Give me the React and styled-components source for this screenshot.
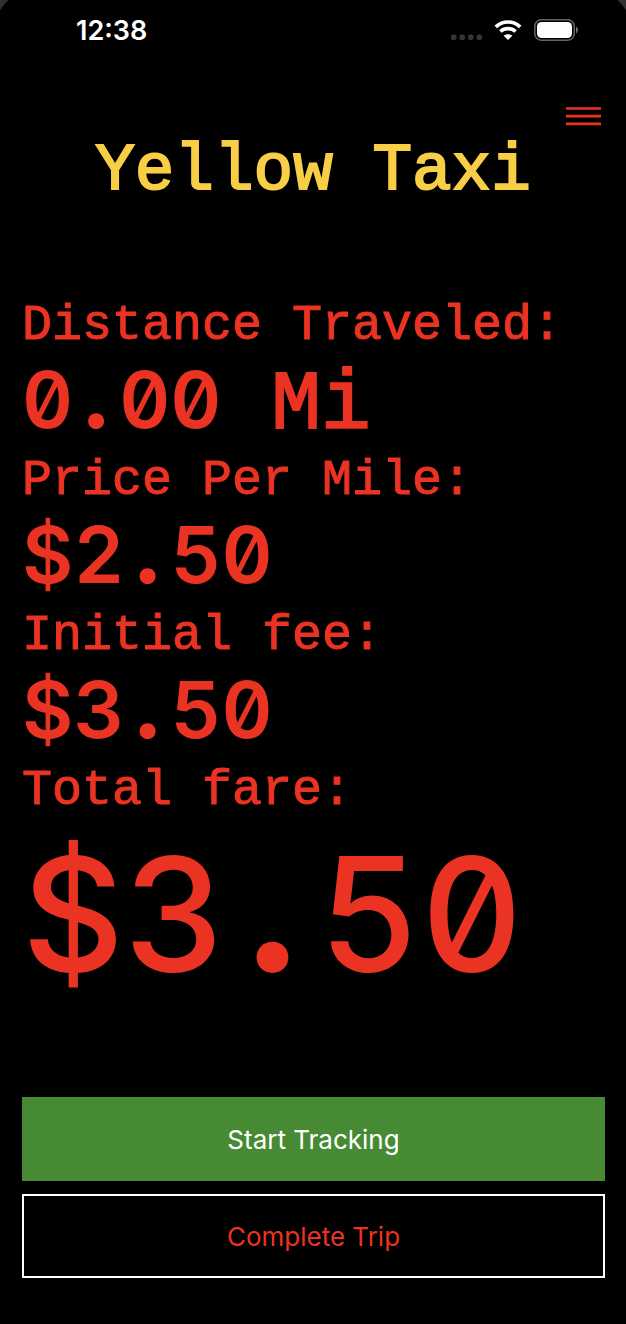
import React from "react";
import styled, { createGlobalStyle } from "styled-components";

const GlobalStyle = createGlobalStyle`
  * { box-sizing: border-box; }
  body { margin: 0; background: #000; }
`;

const Screen = styled.div`
  position: relative;
  display: flex;
  flex-direction: column;
  min-height: 100vh;
  background: #000;
  color: #eb3323;
  font-family: Inter, "Liberation Sans", sans-serif;
`;

const Corner = styled.svg`
  position: absolute;
  top: 0;
  ${(p) => (p.$side === "right" ? "right: 0; transform: scaleX(-1);" : "left: 0;")}
`;

const StatusBar = styled.header`
  display: flex;
  align-items: center;
  justify-content: space-between;
  height: 60px;
  padding: 0 48px 0 76px;
  color: #fff;
`;

const Clock = styled.time`
  padding-top: 2px;
  font-size: 27px;
  line-height: 32px;
  font-weight: 600;
`;

const StatusIcons = styled.div`
  display: flex;
  align-items: center;
  gap: 12px;
`;

const Toolbar = styled.nav`
  display: flex;
  justify-content: flex-end;
  padding: 44px 24px 0;
`;

const MenuButton = styled.button`
  display: flex;
  padding: 0;
  border: 0;
  background: none;
  color: inherit;
  cursor: pointer;
`;

const Title = styled.h1`
  margin: 0;
  color: #f8ce46;
  font-family: "Liberation Mono", monospace;
  font-size: 66px;
  line-height: 88px;
  font-weight: 400;
  text-align: center;
  white-space: nowrap;
  -webkit-text-stroke: 2px currentColor;
`;

const Meter = styled.dl`
  margin: 80px 0 0;
  padding: 0 22px;
  font-family: "Liberation Mono", monospace;
  white-space: nowrap;
`;

const Label = styled.dt`
  font-size: 50px;
  line-height: 60px;
  -webkit-text-stroke: 1px currentColor;
`;

const Value = styled.dd`
  margin: 0;
  padding-bottom: 8px;
  font-family: Inter, "Liberation Mono", monospace;
  font-variant-numeric: tabular-nums slashed-zero;
  font-weight: ${(p) => (p.$total ? 500 : 600)};
  font-size: ${(p) => (p.$total ? 158 : 79)}px;
  line-height: ${(p) => (p.$total ? 186 : 87)}px;
`;

/* The decimal point takes a cell about as wide as a digit's, like on a taximeter. */
const Point = styled.span`
  display: inline-block;
  width: ${(p) => (p.$total ? 92 : 46)}px;
  font-weight: 900;
  text-align: center;
`;

const Unit = styled.span`
  font-family: "Liberation Mono", monospace;
  font-size: 83px;
  font-weight: 400;
  line-height: 0;
  -webkit-text-stroke: 2px currentColor;
`;

const Actions = styled.div`
  display: flex;
  flex-direction: column;
  gap: 13px;
  margin-top: auto;
  padding: 24px 21px 46px 22px;
`;

const ActionButton = styled.button`
  height: 84px;
  padding: 2px 0 0;
  border: 2px solid ${(p) => (p.$primary ? "#468b34" : "#fff")};
  border-radius: 0;
  background: ${(p) => (p.$primary ? "#468b34" : "#000")};
  color: ${(p) => (p.$primary ? "#fff" : "#eb3323")};
  font-family: inherit;
  font-size: 26px;
  line-height: 32px;
  cursor: pointer;
`;

const readings = [
  { label: "Distance Traveled:", value: "0.00", unit: " Mi" },
  { label: "Price Per Mile:", value: "$2.50" },
  { label: "Initial fee:", value: "$3.50" },
  { label: "Total fare:", value: "$3.50", total: true },
];

function SignalDots() {
  return (
    <svg width="32" height="20" viewBox="0 0 32 20" fill="#363636" aria-hidden="true">
      {[1, 9.5, 18, 26.5].map((x) => (
        <rect key={x} x={x} y="14.5" width="5.5" height="5.5" rx="2" />
      ))}
    </svg>
  );
}

function Wifi() {
  return (
    <svg width="28" height="20" viewBox="0 0 28 20" fill="none" stroke="#fff" aria-hidden="true">
      <path d="M1.8 6.8C8.8 .4 19.2 .4 26.2 6.8" strokeWidth="3.7" />
      <path d="M6.4 11.5C10.8 7.7 17.2 7.7 21.6 11.5" strokeWidth="3.6" />
      <path d="M14 20L9.7 15.8C12.1 13.8 15.9 13.8 18.3 15.8Z" fill="#fff" stroke="none" />
    </svg>
  );
}

function Battery() {
  return (
    <svg width="44" height="22" viewBox="0 0 44 22" aria-hidden="true">
      <rect x=".8" y=".8" width="39.4" height="20.4" rx="6.4" fill="none" stroke="#646464" strokeWidth="1.5" />
      <rect x="3" y="3" width="35" height="16" rx="4.5" fill="#fff" />
      <path d="M42 7.5C44.5 9 44.5 13 42 14.5Z" fill="#777" />
    </svg>
  );
}

function CornerEdge({ side }) {
  return (
    <Corner $side={side} width="9" height="11" viewBox="0 0 9 11" aria-hidden="true">
      <path d="M0 0H8.5Q4 4 0 10.5Z" fill="#303030" />
    </Corner>
  );
}

function Reading({ label, value, unit, total }) {
  const [whole, cents] = value.split(".");
  return (
    <div>
      <Label>{label}</Label>
      <Value $total={total}>
        {whole}
        <Point $total={total}>.</Point>
        {cents}
        {unit && <Unit>{unit}</Unit>}
      </Value>
    </div>
  );
}

export default function App() {
  return (
    <Screen>
      <GlobalStyle />
      <CornerEdge side="left" />
      <CornerEdge side="right" />
      <StatusBar>
        <Clock>12:38</Clock>
        <StatusIcons>
          <SignalDots />
          <Wifi />
          <Battery />
        </StatusIcons>
      </StatusBar>
      <Toolbar>
        <MenuButton type="button" aria-label="Menu">
          <svg width="37" height="24" viewBox="0 0 37 24" stroke="currentColor" strokeWidth="2.7" aria-hidden="true">
            <path d="M1 4.5H36M1 12.2H36M1 19.9H36" />
          </svg>
        </MenuButton>
      </Toolbar>
      <main>
        <Title>Yellow Taxi</Title>
        <Meter>
          {readings.map((r) => (
            <Reading key={r.label} {...r} />
          ))}
        </Meter>
      </main>
      <Actions>
        <ActionButton type="button" $primary>Start Tracking</ActionButton>
        <ActionButton type="button">Complete Trip</ActionButton>
      </Actions>
    </Screen>
  );
}
